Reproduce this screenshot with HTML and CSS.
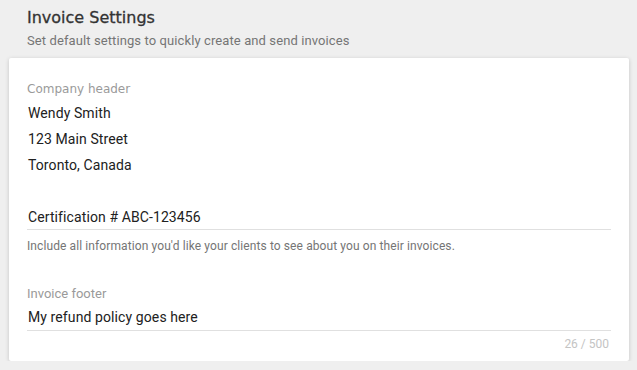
FILE: index.html
```html
<!DOCTYPE html>
<html lang="en">
<head>
  <meta charset="UTF-8" />
  <meta name="viewport" content="width=device-width, initial-scale=1.0" />
  <title>Invoice Settings</title>
  <link rel="stylesheet" href="styles.css">
</head>
<body>
  <header class="page-head">
    <h1>Invoice Settings</h1>
    <p>Set default settings to quickly create and send invoices</p>
  </header>

  <div class="card">
    <label class="field-label label-alt" for="companyHeader">Company header</label>
    <textarea id="companyHeader" class="field-input header-input" rows="5" readonly>Wendy Smith
123 Main Street
Toronto, Canada

Certification # ABC-123456</textarea>
    <div class="field-help">Include all information you'd like your clients to see about you on their invoices.</div>

    <label class="field-label footer-label" for="invoiceFooter">Invoice footer</label>
    <input type="text" id="invoiceFooter" class="field-input" value="My refund policy goes here" readonly>
    <div class="field-counter">26 / 500</div>
  </div>
</body>
</html>
```

FILE: styles.css
```css
:root {
  --bg-color: #efefef;
  --text-color: #212121;
  --muted: #757575;
  --label: #9a9a9a;
  --line: #e0e0e0;
}

* {
  box-sizing: border-box;
  margin: 0;
  padding: 0;
}

body {
  background-color: var(--bg-color);
  font-family: Roboto, 'Liberation Sans', sans-serif;
  color: var(--text-color);
}

.page-head {
  padding: 8px 27px 0;
}

.page-head h1 {
  font-family: 'DejaVu Sans', sans-serif;
  font-size: 16px;
  font-weight: 500;
  line-height: 20px;
  color: #333;
  -webkit-text-stroke: 0.3px #333;
}

.page-head p {
  margin-top: 4px;
  font-size: 13px;
  line-height: 18px;
  letter-spacing: 0.1px;
  color: var(--muted);
}

.card {
  margin: 8px 8px 0 9px;
  padding: 24px 18px 9px;
  background: #fff;
  border-radius: 2px;
  box-shadow: 0 1px 4px rgba(0,0,0,0.18);
  display: flex;
  flex-direction: column;
}

.field-label {
  font-size: 13px;
  line-height: 14px;
  color: var(--label);
}

.label-alt {
  font-family: 'DejaVu Sans', sans-serif;
  font-size: 12px;
}

.field-input {
  display: block;
  width: 100%;
  border: none;
  border-bottom: 1px solid var(--line);
  outline: none;
  resize: none;
  background: transparent;
  font-family: Roboto, 'Liberation Sans', sans-serif;
  font-size: 14px;
  line-height: 26px;
  letter-spacing: 0.1px;
  color: var(--text-color);
  padding: 0 1px;
}

.header-input {
  margin-top: 4px;
  height: 130px;
  overflow: hidden;
}

.field-help {
  margin-top: 8px;
  font-size: 12px;
  line-height: 16px;
  letter-spacing: 0.1px;
  color: var(--muted);
}

.footer-label {
  margin-top: 33px;
}

#invoiceFooter {
  margin-top: 3px;
  height: 27px;
}

.field-counter {
  margin-top: 5px;
  align-self: flex-end;
  padding-right: 2px;
  font-size: 12px;
  line-height: 16px;
  color: #c4c4c4;
}
```
